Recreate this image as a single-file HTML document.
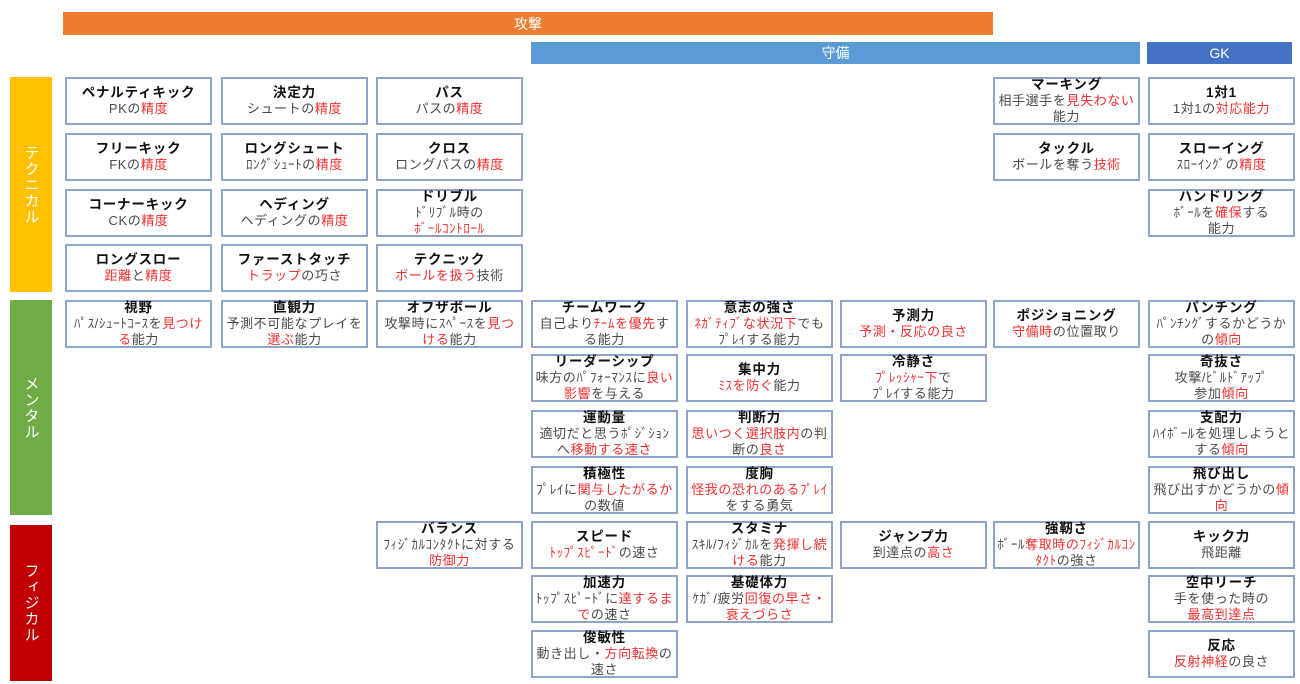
<!DOCTYPE html>
<html><head><meta charset="utf-8"><style>
body{margin:0;width:1300px;height:684px;background:#fff;position:relative;overflow:hidden;font-family:"Liberation Sans","Noto Sans CJK JP",sans-serif}
.bar{position:absolute;color:#fff;font-size:14px;display:flex;align-items:center;justify-content:center}
.side{position:absolute;color:#fff;font-size:15px;writing-mode:vertical-rl;display:flex;align-items:center;justify-content:center;letter-spacing:1px}
.b{position:absolute;width:143px;height:44px;border:2px solid #8FA4CB;box-sizing:content-box;display:flex;flex-direction:column;justify-content:center;align-items:center;text-align:center;font-size:13px;line-height:16px;color:#4a4a4a;letter-spacing:0.6px;white-space:nowrap}
.b b{color:#111;font-size:13.5px;letter-spacing:0.8px}
.r{color:#F03030}
</style></head><body>
<div class="bar" style="left:63px;top:12px;width:930px;height:23px;background:#ED7D31">攻撃</div>
<div class="bar" style="left:531px;top:42px;width:609px;height:22px;background:#5B9BD5">守備</div>
<div class="bar" style="left:1147px;top:42px;width:145px;height:22px;background:#4472C4">GK</div>
<div class="side" style="left:10px;top:77px;width:42px;height:215px;background:#FFC000">テクニカル</div>
<div class="side" style="left:10px;top:300px;width:42px;height:215px;background:#70AD47">メンタル</div>
<div class="side" style="left:10px;top:525px;width:42px;height:156px;background:#C00000">フィジカル</div>

<div class="b" style="left:65px;top:77px"><b>ペナルティキック</b><span>PKの<span class="r">精度</span></span></div>
<div class="b" style="left:65px;top:133px"><b>フリーキック</b><span>FKの<span class="r">精度</span></span></div>
<div class="b" style="left:65px;top:189px"><b>コーナーキック</b><span>CKの<span class="r">精度</span></span></div>
<div class="b" style="left:65px;top:244px"><b>ロングスロー</b><span><span class="r">距離</span>と<span class="r">精度</span></span></div>
<div class="b" style="left:221px;top:77px"><b>決定力</b><span>シュートの<span class="r">精度</span></span></div>
<div class="b" style="left:221px;top:133px"><b>ロングシュート</b><span>ﾛﾝｸﾞｼｭｰﾄの<span class="r">精度</span></span></div>
<div class="b" style="left:221px;top:189px"><b>ヘディング</b><span>ヘディングの<span class="r">精度</span></span></div>
<div class="b" style="left:221px;top:244px"><b>ファーストタッチ</b><span><span class="r">トラップ</span>の巧さ</span></div>
<div class="b" style="left:376px;top:77px"><b>パス</b><span>パスの<span class="r">精度</span></span></div>
<div class="b" style="left:376px;top:133px"><b>クロス</b><span>ロングパスの<span class="r">精度</span></span></div>
<div class="b" style="left:376px;top:189px"><b>ドリブル</b><span>ﾄﾞﾘﾌﾞﾙ時の</span><span class="r">ﾎﾞｰﾙｺﾝﾄﾛｰﾙ</span></div>
<div class="b" style="left:376px;top:244px"><b>テクニック</b><span><span class="r">ボールを扱う</span>技術</span></div>
<div class="b" style="left:993px;top:77px"><b>マーキング</b><span>相手選手を<span class="r">見失わない</span></span><span>能力</span></div>
<div class="b" style="left:993px;top:133px"><b>タックル</b><span>ボールを奪う<span class="r">技術</span></span></div>
<div class="b" style="left:1148px;top:77px"><b>1対1</b><span>1対1の<span class="r">対応能力</span></span></div>
<div class="b" style="left:1148px;top:133px"><b>スローイング</b><span>ｽﾛｰｲﾝｸﾞの<span class="r">精度</span></span></div>
<div class="b" style="left:1148px;top:189px"><b>ハンドリング</b><span>ﾎﾞｰﾙを<span class="r">確保</span>する</span><span>能力</span></div>

<div class="b" style="left:65px;top:300px"><b>視野</b><span>ﾊﾟｽ/ｼｭｰﾄｺｰｽを<span class="r">見つけ</span></span><span><span class="r">る</span>能力</span></div>
<div class="b" style="left:221px;top:300px"><b>直観力</b><span>予測不可能なプレイを</span><span><span class="r">選ぶ</span>能力</span></div>
<div class="b" style="left:376px;top:300px"><b>オフザボール</b><span>攻撃時にｽﾍﾟｰｽを<span class="r">見つ</span></span><span><span class="r">ける</span>能力</span></div>
<div class="b" style="left:531px;top:300px"><b>チームワーク</b><span>自己より<span class="r">ﾁｰﾑを優先</span>す</span><span>る能力</span></div>
<div class="b" style="left:531px;top:354px"><b>リーダーシップ</b><span>味方のﾊﾟﾌｫｰﾏﾝｽに<span class="r">良い</span></span><span><span class="r">影響</span>を与える</span></div>
<div class="b" style="left:531px;top:410px"><b>運動量</b><span>適切だと思うﾎﾟｼﾞｼｮﾝ</span><span>へ<span class="r">移動する速さ</span></span></div>
<div class="b" style="left:531px;top:466px"><b>積極性</b><span>ﾌﾟﾚｲに<span class="r">関与したがるか</span></span><span>の数値</span></div>
<div class="b" style="left:686px;top:300px"><b>意志の強さ</b><span><span class="r">ﾈｶﾞﾃｨﾌﾞな状況下</span>でも</span><span>ﾌﾟﾚｲする能力</span></div>
<div class="b" style="left:686px;top:354px"><b>集中力</b><span><span class="r">ﾐｽを防ぐ</span>能力</span></div>
<div class="b" style="left:686px;top:410px"><b>判断力</b><span><span class="r">思いつく選択肢内</span>の判</span><span>断の<span class="r">良さ</span></span></div>
<div class="b" style="left:686px;top:466px"><b>度胸</b><span class="r">怪我の恐れのあるﾌﾟﾚｲ</span><span>をする勇気</span></div>
<div class="b" style="left:840px;top:300px"><b>予測力</b><span class="r">予測・反応の良さ</span></div>
<div class="b" style="left:840px;top:354px"><b>冷静さ</b><span><span class="r">ﾌﾟﾚｯｼｬｰ下</span>で</span><span>ﾌﾟﾚｲする能力</span></div>
<div class="b" style="left:993px;top:300px"><b>ポジショニング</b><span><span class="r">守備時</span>の位置取り</span></div>
<div class="b" style="left:1148px;top:300px"><b>パンチング</b><span>ﾊﾟﾝﾁﾝｸﾞするかどうか</span><span>の<span class="r">傾向</span></span></div>
<div class="b" style="left:1148px;top:354px"><b>奇抜さ</b><span>攻撃/ﾋﾞﾙﾄﾞｱｯﾌﾟ</span><span>参加<span class="r">傾向</span></span></div>
<div class="b" style="left:1148px;top:410px"><b>支配力</b><span>ﾊｲﾎﾞｰﾙを処理しようと</span><span>する<span class="r">傾向</span></span></div>
<div class="b" style="left:1148px;top:466px"><b>飛び出し</b><span>飛び出すかどうかの<span class="r">傾</span></span><span class="r">向</span></div>

<div class="b" style="left:376px;top:521px"><b>バランス</b><span>ﾌｨｼﾞｶﾙｺﾝﾀｸﾄに対する</span><span class="r">防御力</span></div>
<div class="b" style="left:531px;top:521px"><b>スピード</b><span><span class="r">ﾄｯﾌﾟｽﾋﾟｰﾄﾞ</span>の速さ</span></div>
<div class="b" style="left:531px;top:575px"><b>加速力</b><span>ﾄｯﾌﾟｽﾋﾟｰﾄﾞに<span class="r">達するま</span></span><span><span class="r">で</span>の速さ</span></div>
<div class="b" style="left:531px;top:630px"><b>俊敏性</b><span>動き出し・<span class="r">方向転換</span>の</span><span>速さ</span></div>
<div class="b" style="left:686px;top:521px"><b>スタミナ</b><span>ｽｷﾙ/ﾌｨｼﾞｶﾙを<span class="r">発揮し続</span></span><span><span class="r">ける</span>能力</span></div>
<div class="b" style="left:686px;top:575px"><b>基礎体力</b><span>ｹｶﾞ/疲労<span class="r">回復の早さ・</span></span><span class="r">衰えづらさ</span></div>
<div class="b" style="left:840px;top:521px"><b>ジャンプ力</b><span>到達点の<span class="r">高さ</span></span></div>
<div class="b" style="left:993px;top:521px"><b>強靭さ</b><span>ﾎﾞｰﾙ<span class="r">奪取時のﾌｨｼﾞｶﾙｺﾝ</span></span><span><span class="r">ﾀｸﾄ</span>の強さ</span></div>
<div class="b" style="left:1148px;top:521px"><b>キック力</b><span>飛距離</span></div>
<div class="b" style="left:1148px;top:575px"><b>空中リーチ</b><span>手を使った時の</span><span class="r">最高到達点</span></div>
<div class="b" style="left:1148px;top:630px"><b>反応</b><span><span class="r">反射神経</span>の良さ</span></div>
</body></html>
